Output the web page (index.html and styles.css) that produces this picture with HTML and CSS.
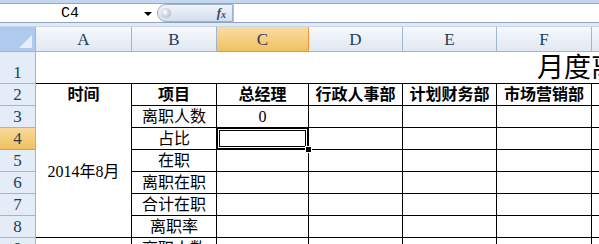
FILE: index.html
```html
<!DOCTYPE html>
<html lang="zh-CN">
<head>
    <meta charset="UTF-8">
    <title>月度离职统计表</title>
    <link rel="stylesheet" href="styles.css">
</head>
<body>
    <div class="top-strip"></div>

    <div class="formula-bar">
        <div class="name-box">
            <span class="cell-ref">C4</span>
            <span class="drop-arrow"></span>
        </div>
        <div class="fx-button">
            <span class="knob"></span>
            <span class="fx">f<sub>x</sub></span>
        </div>
        <div class="formula-input"></div>
    </div>
    <div class="band"></div>

    <div class="sheet">
        <!-- column headers -->
        <div class="corner"><span class="corner-tri"></span></div>
        <div class="col-head">A</div>
        <div class="col-head">B</div>
        <div class="col-head active">C</div>
        <div class="col-head">D</div>
        <div class="col-head">E</div>
        <div class="col-head">F</div>
        <div class="col-head">G</div>

        <!-- row 1 -->
        <div class="row-head">1</div>
        <div class="cell title">月度离职统计表</div>

        <!-- row 2 -->
        <div class="row-head">2</div>
        <div class="cell th br">时间</div>
        <div class="cell th br bb">项目</div>
        <div class="cell th br bb">总经理</div>
        <div class="cell th br bb">行政人事部</div>
        <div class="cell th br bb">计划财务部</div>
        <div class="cell th br bb">市场营销部</div>
        <div class="cell th br bb"></div>

        <!-- rows 3-8 -->
        <div class="row-head">3</div>
        <div class="cell merged br bb">2014年8月</div>
        <div class="cell br bb">离职人数</div>
        <div class="cell br bb num">0</div>
        <div class="cell br bb"></div>
        <div class="cell br bb"></div>
        <div class="cell br bb"></div>
        <div class="cell br bb"></div>

        <div class="row-head active">4</div>
        <div class="cell br bb">占比</div>
        <div class="cell br bb selected"><span class="fill-handle"></span></div>
        <div class="cell br bb"></div>
        <div class="cell br bb"></div>
        <div class="cell br bb"></div>
        <div class="cell br bb"></div>

        <div class="row-head">5</div>
        <div class="cell br bb">在职</div>
        <div class="cell br bb"></div>
        <div class="cell br bb"></div>
        <div class="cell br bb"></div>
        <div class="cell br bb"></div>
        <div class="cell br bb"></div>

        <div class="row-head">6</div>
        <div class="cell br bb">离职在职</div>
        <div class="cell br bb"></div>
        <div class="cell br bb"></div>
        <div class="cell br bb"></div>
        <div class="cell br bb"></div>
        <div class="cell br bb"></div>

        <div class="row-head">7</div>
        <div class="cell br bb">合计在职</div>
        <div class="cell br bb"></div>
        <div class="cell br bb"></div>
        <div class="cell br bb"></div>
        <div class="cell br bb"></div>
        <div class="cell br bb"></div>

        <div class="row-head">8</div>
        <div class="cell br bb">离职率</div>
        <div class="cell br bb"></div>
        <div class="cell br bb"></div>
        <div class="cell br bb"></div>
        <div class="cell br bb"></div>
        <div class="cell br bb"></div>

        <!-- row 9 (cut off by the window) -->
        <div class="row-head">9</div>
        <div class="cell br"></div>
        <div class="cell br">离职人数</div>
        <div class="cell br"></div>
        <div class="cell br"></div>
        <div class="cell br"></div>
        <div class="cell br"></div>
        <div class="cell br"></div>
    </div>
</body>
</html>
```

FILE: styles.css
```css
body {
    margin: 0;
    width: 599px;
    height: 244px;
    overflow: hidden;
    background: #fff;
    font-family: "Liberation Serif", "Noto Sans CJK SC", serif;
}

.top-strip {
    height: 3px;
    background: #c4d7ef;
    border-bottom: 1px solid #8da9cc;
}

/* formula bar */
.formula-bar {
    display: flex;
    height: 18px;
    border-bottom: 1px solid #8ea4c1;
    background: #fff;
}

.name-box {
    width: 157px;
    flex: none;
    display: flex;
    align-items: center;
}

.cell-ref {
    width: 140px;
    text-align: center;
    font-family: "Liberation Mono", monospace;
    font-size: 15px;
    color: #000;
}

.drop-arrow {
    width: 0;
    height: 0;
    border-left: 4px solid transparent;
    border-right: 4px solid transparent;
    border-top: 4px solid #000;
    margin-left: 4px;
    margin-top: 2px;
}

.fx-button {
    width: 76px;
    flex: none;
    height: 18px;
    box-sizing: border-box;
    border: 1px solid #9cb1cc;
    border-radius: 10px 0 0 10px;
    background: linear-gradient(#f0f4fa, #d3deee);
    display: flex;
    align-items: center;
    justify-content: space-between;
    padding: 0 6px 0 3px;
}

.knob {
    width: 10px;
    height: 10px;
    border-radius: 50%;
    background: radial-gradient(circle at 40% 40%, #ffffff, #b9c2cc 70%, #9aa4b0);
}

.fx {
    font-family: "Liberation Serif", serif;
    font-style: italic;
    font-weight: bold;
    font-size: 13px;
    color: #3b4a5c;
    line-height: 1;
}

.fx sub {
    font-size: 10px;
    vertical-align: -1px;
}

.formula-input {
    flex: 1;
    border-left: 1px solid #b5c4d8;
}

.band {
    height: 3px;
    background: #e3e9f2;
    border-bottom: 1px solid #c9d6e6;
}

/* sheet grid */
.sheet {
    width: 686px;
    display: grid;
    grid-template-columns: 36px 96px 85px 92px 94px 94px 95px 94px;
    grid-template-rows: 25px 32px repeat(8, 22px);
    background: #e9eef6;
}

.corner {
    background: #aecbee;
    border-right: 1px solid #9eb6ce;
    border-bottom: 1px solid #9eb6ce;
    position: relative;
}

.corner-tri {
    position: absolute;
    right: 3px;
    bottom: 3px;
    width: 0;
    height: 0;
    border-left: 13px solid transparent;
    border-bottom: 13px solid #e6eef9;
}

.col-head {
    background: linear-gradient(#f6f8fc, #e1e8f2);
    border-right: 1px solid #9eb6ce;
    border-bottom: 1px solid #9eb6ce;
    display: flex;
    align-items: center;
    justify-content: center;
    font-size: 17px;
    color: #1e3c5a;
    padding-top: 2px;
    box-sizing: border-box;
}

.col-head.active {
    background: linear-gradient(#f9dca6, #f1c15f);
    border-color: #f29536;
}

.row-head {
    background: #e4ecf7;
    border-right: 1px solid #9eb6ce;
    border-bottom: 1px solid #9eb6ce;
    display: flex;
    align-items: flex-end;
    justify-content: center;
    font-size: 17px;
    line-height: 18px;
    color: #1e3c5a;
    padding-bottom: 1px;
    box-sizing: border-box;
}

.row-head.active {
    background: linear-gradient(#f9d99b, #f1c15f);
    border-bottom-color: #f29536;
}

.cell {
    background: #fff;
    display: flex;
    align-items: center;
    justify-content: center;
    font-size: 16px;
    line-height: 20px;
    color: #000;
    box-sizing: border-box;
    white-space: nowrap;
    overflow: hidden;
    position: relative;
}

.br {
    border-right: 1px solid #000;
}

.bb {
    border-bottom: 1px solid #000;
}

.title {
    grid-column: 2 / 9;
    border-bottom: 1px solid #000;
    justify-content: flex-start;
    padding-left: 501px;
    font-size: 27px;
    line-height: 32px;
}

.th {
    font-weight: bold;
    font-size: 16px;
}

.merged {
    grid-row: span 6;
}

.num {
    font-family: "Liberation Serif", serif;
}

.selected {
    overflow: visible;
    box-shadow: inset 0 0 0 1px #000, inset 0 0 0 2px #fff, inset 0 0 0 3px #000;
}

.fill-handle {
    position: absolute;
    right: -4px;
    bottom: -4px;
    width: 5px;
    height: 5px;
    background: #000;
    border: 1px solid #fff;
    z-index: 2;
}
```
